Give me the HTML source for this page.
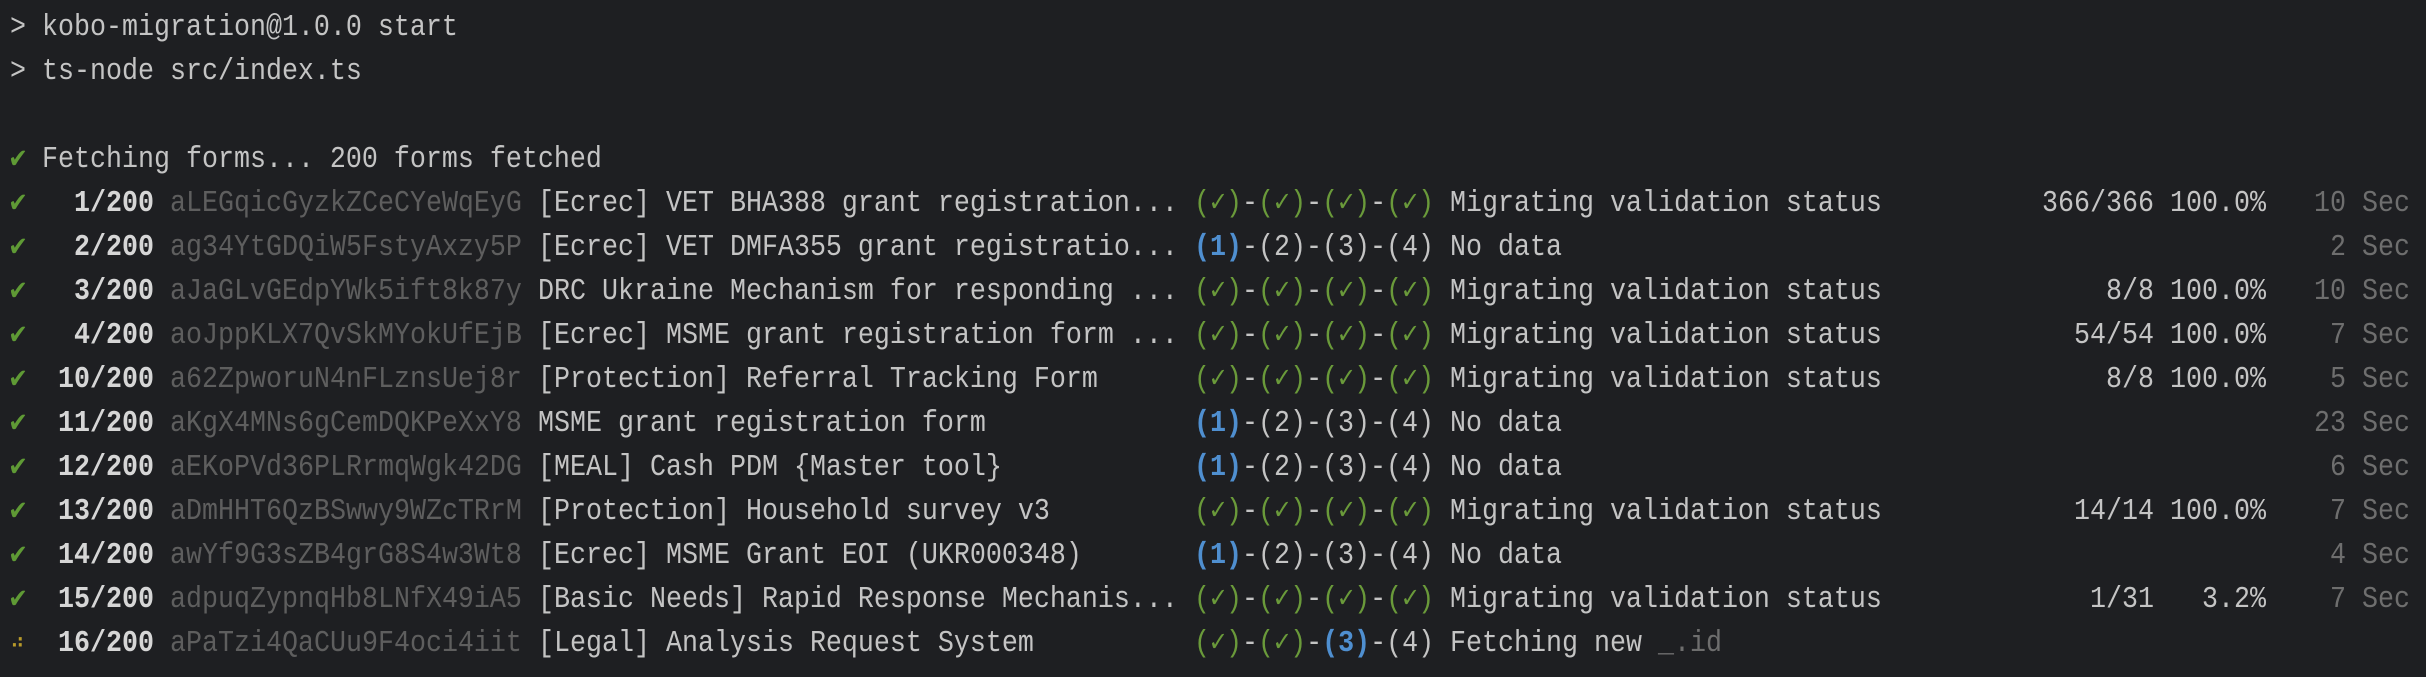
<!DOCTYPE html>
<html><head><meta charset="utf-8"><style>
html,body{margin:0;padding:0;background:#1e1f22;width:2426px;height:677px;overflow:hidden}
body{font-family:"Liberation Mono","DejaVu Sans Mono",monospace;font-size:26.67px;color:#c4c4c4;position:relative}
.r{position:absolute;left:0;height:44px;line-height:44px;width:2426px;white-space:pre}
.r span{position:absolute;top:0;transform:scaleY(1.15);transform-origin:50% 50%}
.ck{left:10px;color:#5f9a35}
.sp{left:10px;color:#b89a2a;font-size:20px}
.n{left:42px;width:112px;text-align:right;font-weight:bold;color:#d6d6d6}
.id{left:170px;color:#5e5e5e}
.t{left:538px}
.s{left:1194px}
.m{left:1450px}
.c{right:272px;text-align:right}
.p{right:160px;text-align:right}
.sec{right:16px;text-align:right;color:#6e6e6e}
i{font-style:normal}
.g{color:#6a9a3a}
.b{color:#4f8fd0;font-weight:bold}
.gr{color:#6e6e6e}
</style></head><body>
<div class="r" style="top:6px"><span style="left:10px">&gt; kobo-migration@1.0.0 start</span></div>
<div class="r" style="top:50px"><span style="left:10px">&gt; ts-node src/index.ts</span></div>
<div class="r" style="top:138px"><span class="ck">✔</span><span style="left:42px">Fetching forms... 200 forms fetched</span></div>

<div class="r" style="top:182px"><span class="ck">✔</span><span class="n">1/200</span><span class="id">aLEGqicGyzkZCeCYeWqEyG</span><span class="t">[Ecrec] VET BHA388 grant registration...</span><span class="s"><i class="g">(✓)</i>-<i class="g">(✓)</i>-<i class="g">(✓)</i>-<i class="g">(✓)</i></span><span class="m">Migrating validation status</span><span class="c">366/366</span><span class="p">100.0%</span><span class="sec">10 Sec</span></div>

<div class="r" style="top:226px"><span class="ck">✔</span><span class="n">2/200</span><span class="id">ag34YtGDQiW5FstyAxzy5P</span><span class="t">[Ecrec] VET DMFA355 grant registratio...</span><span class="s"><i class="b">(1)</i>-(2)-(3)-(4)</span><span class="m">No data</span><span class="sec">2 Sec</span></div>

<div class="r" style="top:270px"><span class="ck">✔</span><span class="n">3/200</span><span class="id">aJaGLvGEdpYWk5ift8k87y</span><span class="t">DRC Ukraine Mechanism for responding ...</span><span class="s"><i class="g">(✓)</i>-<i class="g">(✓)</i>-<i class="g">(✓)</i>-<i class="g">(✓)</i></span><span class="m">Migrating validation status</span><span class="c">8/8</span><span class="p">100.0%</span><span class="sec">10 Sec</span></div>

<div class="r" style="top:314px"><span class="ck">✔</span><span class="n">4/200</span><span class="id">aoJppKLX7QvSkMYokUfEjB</span><span class="t">[Ecrec] MSME grant registration form ...</span><span class="s"><i class="g">(✓)</i>-<i class="g">(✓)</i>-<i class="g">(✓)</i>-<i class="g">(✓)</i></span><span class="m">Migrating validation status</span><span class="c">54/54</span><span class="p">100.0%</span><span class="sec">7 Sec</span></div>

<div class="r" style="top:358px"><span class="ck">✔</span><span class="n">10/200</span><span class="id">a62ZpworuN4nFLznsUej8r</span><span class="t">[Protection] Referral Tracking Form</span><span class="s"><i class="g">(✓)</i>-<i class="g">(✓)</i>-<i class="g">(✓)</i>-<i class="g">(✓)</i></span><span class="m">Migrating validation status</span><span class="c">8/8</span><span class="p">100.0%</span><span class="sec">5 Sec</span></div>

<div class="r" style="top:402px"><span class="ck">✔</span><span class="n">11/200</span><span class="id">aKgX4MNs6gCemDQKPeXxY8</span><span class="t">MSME grant registration form</span><span class="s"><i class="b">(1)</i>-(2)-(3)-(4)</span><span class="m">No data</span><span class="sec">23 Sec</span></div>

<div class="r" style="top:446px"><span class="ck">✔</span><span class="n">12/200</span><span class="id">aEKoPVd36PLRrmqWgk42DG</span><span class="t">[MEAL] Cash PDM {Master tool}</span><span class="s"><i class="b">(1)</i>-(2)-(3)-(4)</span><span class="m">No data</span><span class="sec">6 Sec</span></div>

<div class="r" style="top:490px"><span class="ck">✔</span><span class="n">13/200</span><span class="id">aDmHHT6QzBSwwy9WZcTRrM</span><span class="t">[Protection] Household survey v3</span><span class="s"><i class="g">(✓)</i>-<i class="g">(✓)</i>-<i class="g">(✓)</i>-<i class="g">(✓)</i></span><span class="m">Migrating validation status</span><span class="c">14/14</span><span class="p">100.0%</span><span class="sec">7 Sec</span></div>

<div class="r" style="top:534px"><span class="ck">✔</span><span class="n">14/200</span><span class="id">awYf9G3sZB4grG8S4w3Wt8</span><span class="t">[Ecrec] MSME Grant EOI (UKR000348)</span><span class="s"><i class="b">(1)</i>-(2)-(3)-(4)</span><span class="m">No data</span><span class="sec">4 Sec</span></div>

<div class="r" style="top:578px"><span class="ck">✔</span><span class="n">15/200</span><span class="id">adpuqZypnqHb8LNfX49iA5</span><span class="t">[Basic Needs] Rapid Response Mechanis...</span><span class="s"><i class="g">(✓)</i>-<i class="g">(✓)</i>-<i class="g">(✓)</i>-<i class="g">(✓)</i></span><span class="m">Migrating validation status</span><span class="c">1/31</span><span class="p">3.2%</span><span class="sec">7 Sec</span></div>

<div class="r" style="top:622px"><span class="sp">⠴</span><span class="n">16/200</span><span class="id">aPaTzi4QaCUu9F4oci4iit</span><span class="t">[Legal] Analysis Request System</span><span class="s"><i class="g">(✓)</i>-<i class="g">(✓)</i>-<i class="b">(3)</i>-(4)</span><span class="m">Fetching new <i class="gr">_.id</i></span></div>
</body></html>
